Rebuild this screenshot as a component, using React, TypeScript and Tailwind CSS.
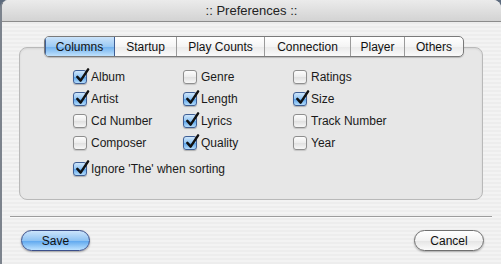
import React from "react";

const font = { fontFamily: '"Liberation Sans", Arial, sans-serif' };

type Item = { label: string; checked: boolean };

const columns: Item[][] = [
    [
        { label: "Album", checked: true },
        { label: "Artist", checked: true },
        { label: "Cd Number", checked: false },
        { label: "Composer", checked: false },
    ],
    [
        { label: "Genre", checked: false },
        { label: "Length", checked: true },
        { label: "Lyrics", checked: true },
        { label: "Quality", checked: true },
    ],
    [
        { label: "Ratings", checked: false },
        { label: "Size", checked: true },
        { label: "Track Number", checked: false },
        { label: "Year", checked: false },
    ],
];

const tabs = ["Columns", "Startup", "Play Counts", "Connection", "Player", "Others"];

function Checkbox({ label, checked }: Item) {
    return (
        <div className="flex items-center h-[22px]">
            {checked ? (
                <div className="relative w-[14px] h-[14px] rounded-[3px] border border-[#3f5f95] bg-[linear-gradient(#cfe6fb,#8ec3f3_50%,#5aa3ea_51%,#b4dcfb)] shadow-[0_1px_1px_rgba(0,0,0,0.25)]">
                    <svg viewBox="0 0 16 16" className="absolute left-[1px] -top-[3px] w-[15px] h-[15px]">
                        <path d="M2.5 9.5 L6 13.5 L14 1.5" fill="none" stroke="#111" strokeWidth="2.6" strokeLinecap="round" strokeLinejoin="round" />
                    </svg>
                </div>
            ) : (
                <div className="w-[14px] h-[14px] rounded-[3px] border border-[#8e8e8e] bg-[linear-gradient(#fdfdfd,#ececec_50%,#e0e0e0_51%,#f7f7f7)] shadow-[0_1px_1px_rgba(0,0,0,0.15)]" />
            )}
            <span className="ml-[4px] text-[12px] text-[#1a1a1a]">{label}</span>
        </div>
    );
}

export default function App() {
    return (
        <div className="w-[501px] h-[264px] bg-[#5d6b7e]" style={font}>
            <div className="h-full flex flex-col rounded-t-[8px] overflow-hidden border-l-2 border-[#7c838d] bg-[repeating-linear-gradient(0deg,#ededed_0px,#ededed_2px,#f3f3f3_2px,#f3f3f3_4px)]">
                {/* barra de título */}
                <div className="h-[22px] shrink-0 flex items-center justify-center border-b border-[#8c8c8c] bg-[linear-gradient(#ebebeb,#d3d3d3)] text-[13px] text-[#222]">
                    :: Preferences ::
                </div>

                {/* tabs + caja */}
                <div className="relative mt-[25px] ml-[17px] w-[464px] h-[153px] rounded-[8px] border border-[#b9b9b9] bg-[#e7e7e7] shadow-[inset_0_1px_2px_rgba(0,0,0,0.08)]">
                    <div className="absolute -top-[12px] left-[24px] flex h-[21px] rounded-[5px] border border-[#7a7a7a] bg-[linear-gradient(#ffffff,#f4f4f4_50%,#e9e9e9_51%,#fafafa)] shadow-[0_1px_1px_rgba(0,0,0,0.2)] overflow-hidden">
                        {tabs.map((t, i) =>
                            i === 0 ? (
                                <div key={t} className="w-[70px] flex items-center justify-center text-[12px] text-[#111] bg-[linear-gradient(#cbe3fa,#9ccaf4_50%,#6fb0ee_51%,#bfe1fc)] border-r border-[#3f5f95] shadow-[inset_1px_0_0_#3f5f95]">
                                    {t}
                                </div>
                            ) : (
                                <div
                                    key={t}
                                    className={`flex items-center justify-center text-[12px] text-[#111] ${i < tabs.length - 1 ? "border-r border-[#9a9a9a]" : ""} ${
                                        ["", "w-[62px]", "w-[88px]", "w-[86px]", "w-[54px]", "w-[58px]"][i]
                                    }`}
                                >
                                    {t}
                                </div>
                            )
                        )}
                    </div>

                    <div className="pt-[18px] pl-[53px] flex">
                        {columns.map((col, i) => (
                            <div key={i} className="w-[110px] flex flex-col">
                                {col.map((it) => (
                                    <Checkbox key={it.label} {...it} />
                                ))}
                            </div>
                        ))}
                    </div>
                    <div className="pl-[53px] mt-[4px]">
                        <Checkbox label="Ignore 'The' when sorting" checked={true} />
                    </div>
                </div>

                {/* separador */}
                <div className="mt-[16px] ml-[8px] w-[482px] h-px bg-[#9c9c9c] shadow-[0_1px_0_#fafafa]" />

                {/* botones */}
                <div className="mt-[13px] flex justify-between pl-[19px] pr-[17px]">
                    <button className="w-[69px] h-[21px] rounded-full border border-[#3b4f8a] bg-[linear-gradient(#cbe4fb,#8fc3f3_50%,#5ca6ee_51%,#bde2ff)] text-[12px] text-[#111] shadow-[0_1px_2px_rgba(0,0,0,0.35)]">
                        Save
                    </button>
                    <button className="w-[70px] h-[21px] rounded-full border border-[#6f6f6f] bg-[linear-gradient(#ffffff,#f2f2f2_50%,#e4e4e4_51%,#fbfbfb)] text-[12px] text-[#111] shadow-[0_1px_2px_rgba(0,0,0,0.3)]">
                        Cancel
                    </button>
                </div>
            </div>
        </div>
    );
}
